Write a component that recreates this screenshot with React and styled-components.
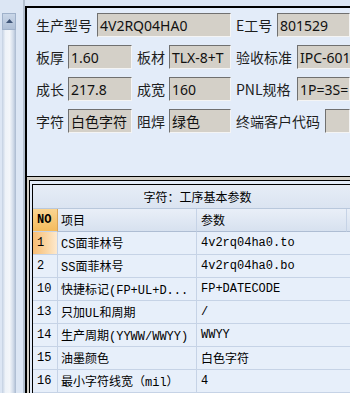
import styled, { createGlobalStyle } from "styled-components";

const Global = createGlobalStyle`
  html, body { margin: 0; padding: 0; background: #dce6f4; }
  * { box-sizing: border-box; }
`;

const Screen = styled.div`
  width: 350px; height: 393px; overflow: hidden;
  display: flex; background: #dce6f4;
  font-family: "Noto Sans", "Noto Sans CJK SC", sans-serif;
`;

const LeftBar = styled.div`
  width: 25px; flex: none; padding: 13px 0 0 2px;
  border-right: 2px solid #b3bfce;
  display: flex;
`;
const Scroll = styled.div`width: 14px; display: flex; flex-direction: column;`;
const UpBtn = styled.div`
  height: 17px; display: flex; justify-content: center; padding-top: 5px;
  background: linear-gradient(#c9d6e8, #aebfd6);
  border: 1px solid #9fb1ca;
`;
const Track = styled.div`
  flex: 1;
  background: linear-gradient(to right, #c3d0e2 0, #eef3f9 25%, #f3f6fa 55%, #d2dcea 80%, #a9b9cf 100%);
`;

const Main = styled.div`
  flex: 1; margin-top: 6px; min-width: 0;
  border-left: 2px solid #000;
  display: flex; flex-direction: column;
`;

const Upper = styled.div`
  height: 171px; flex: none;
  background: #e3ecf9;
  border-top: 2px solid #000; border-bottom: 1px solid #000;
  padding: 5px 0 0 9px;
  display: flex; flex-direction: column; gap: 8px;
`;
const Row = styled.div`display: flex; gap: 5px; height: 24px;`;
const Group = styled.div`display: flex; align-items: center; ${({ $grow }) => $grow && "flex: 1;"}`;
const Label = styled.span`
  width: ${({ $w }) => $w}px; flex: none;
  font-size: 14px; color: #1e1e1e; white-space: nowrap;
  font-family: "Noto Sans CJK SC", sans-serif;
`;
const Box = styled.div`
  height: 24px; ${({ $w }) => ($w ? `width: ${$w}px;` : "flex: 1;")}
  background: #d4d0c8;
  border: 1px solid; border-color: #707070 #f4f4f4 #f4f4f4 #707070;
  padding-left: 2px; font-size: 14px; color: #111; white-space: nowrap; overflow: hidden;
  display: flex; align-items: center;
  font-family: "Noto Sans", "Noto Sans CJK SC", sans-serif;
`;

const Lower = styled.div`
  flex: 1; background: #d4d0c8; padding: 3px 0 0 2px; display: flex; min-height: 0;
`;
const Frame = styled.div`
  flex: 1; background: #e3ecf9; border-top: 1px solid #000; border-left: 1px solid #000;
  padding: 3px 0 0 2px; display: flex;
`;
const Grid = styled.div`
  flex: 1; border-top: 1px solid #000; border-left: 1px solid #000;
  background: #e7effa; overflow: hidden;
  font-family: "Liberation Mono", "Noto Sans CJK SC", monospace; font-size: 12px; color: #000;
`;
const Title = styled.div`
  height: 24px; border-bottom: 1px solid #b9c8dc;
  background: linear-gradient(#e6edf7, #dbe4f1);
  display: flex; align-items: center; justify-content: center; padding-left: 12px;
  font-family: "Noto Sans CJK SC", sans-serif;
`;
const Table = styled.div`
  display: grid; grid-template-columns: 25px 139px 150px 1fr;
  grid-auto-rows: 23px;
`;
const Cell = styled.div`
  display: flex; align-items: center; white-space: nowrap; overflow: hidden;
  padding-left: ${({ $pl }) => $pl ?? 3}px;
  border-right: 1px solid #c6d3e6; border-bottom: 1px solid #c6d3e6;
  ${({ $span }) => $span && "grid-column: span 2; border-right: none;"}
  ${({ $head }) => $head && "background: linear-gradient(#e9eff8, #d7e1ef); border-bottom-color: #aebdd3;"}
  ${({ $no }) => $no && "background: linear-gradient(#fad592, #f4bb5c); font-weight: bold; border-right-color: #d9a55a;"}
  ${({ $sel }) => $sel && "background: linear-gradient(to right, #f7bd74, #fbd7a6 60%, #fde9cf);"}
`;

const rows = [
  ["1", "CS面菲林号", "4v2rq04ha0.to"],
  ["2", "SS面菲林号", "4v2rq04ha0.bo"],
  ["10", "快捷标记(FP+UL+D...", "FP+DATECODE"],
  ["13", "只加UL和周期", "/"],
  ["14", "生产周期(YYWW/WWYY)", "WWYY"],
  ["15", "油墨颜色", "白色字符"],
  ["16", "最小字符线宽（mil）", "4"],
  ["", "", ""],
];

export default function App() {
  return (
    <Screen>
      <Global />
      <LeftBar>
        <Scroll>
          <UpBtn>
            <svg width="7" height="4" viewBox="0 0 7 4"><polygon points="3.5,0 7,4 0,4" fill="#3f5578" /></svg>
          </UpBtn>
          <Track />
        </Scroll>
      </LeftBar>
      <Main>
        <Upper>
          <Row>
            <Group><Label $w={61}>生产型号</Label><Box $w={134}>4V2RQ04HA0</Box></Group>
            <Group $grow><Label $w={41}>E工号</Label><Box>801529</Box></Group>
          </Row>
          <Row>
            <Group><Label $w={32}>板厚</Label><Box $w={64}>1.60</Box></Group>
            <Group><Label $w={32}>板材</Label><Box $w={62}>TLX-8+T</Box></Group>
            <Group $grow><Label $w={61}>验收标准</Label><Box>IPC-601</Box></Group>
          </Row>
          <Row>
            <Group><Label $w={32}>成长</Label><Box $w={64}>217.8</Box></Group>
            <Group><Label $w={32}>成宽</Label><Box $w={62}>160</Box></Group>
            <Group $grow><Label $w={61}>PNL规格</Label><Box>1P=3S=</Box></Group>
          </Row>
          <Row>
            <Group><Label $w={32}>字符</Label><Box $w={64}>白色字符</Box></Group>
            <Group><Label $w={32}>阻焊</Label><Box $w={62}>绿色</Box></Group>
            <Group $grow><Label $w={89}>终端客户代码</Label><Box /></Group>
          </Row>
        </Upper>
        <Lower>
          <Frame>
            <Grid>
              <Title>字符：工序基本参数</Title>
              <Table>
                <Cell $no $pl={4}>NO</Cell>
                <Cell $head>项目</Cell>
                <Cell $head $pl={4}>参数</Cell>
                <Cell $head style={{ borderRight: "none" }} />
                {rows.map(([no, item, val], i) => [
                  <Cell key={`n${i}`} $pl={4} $sel={i === 0}>{no}</Cell>,
                  <Cell key={`i${i}`}>{item}</Cell>,
                  <Cell key={`v${i}`} $pl={4} $span>{val}</Cell>,
                ])}
              </Table>
            </Grid>
          </Frame>
        </Lower>
      </Main>
    </Screen>
  );
}
